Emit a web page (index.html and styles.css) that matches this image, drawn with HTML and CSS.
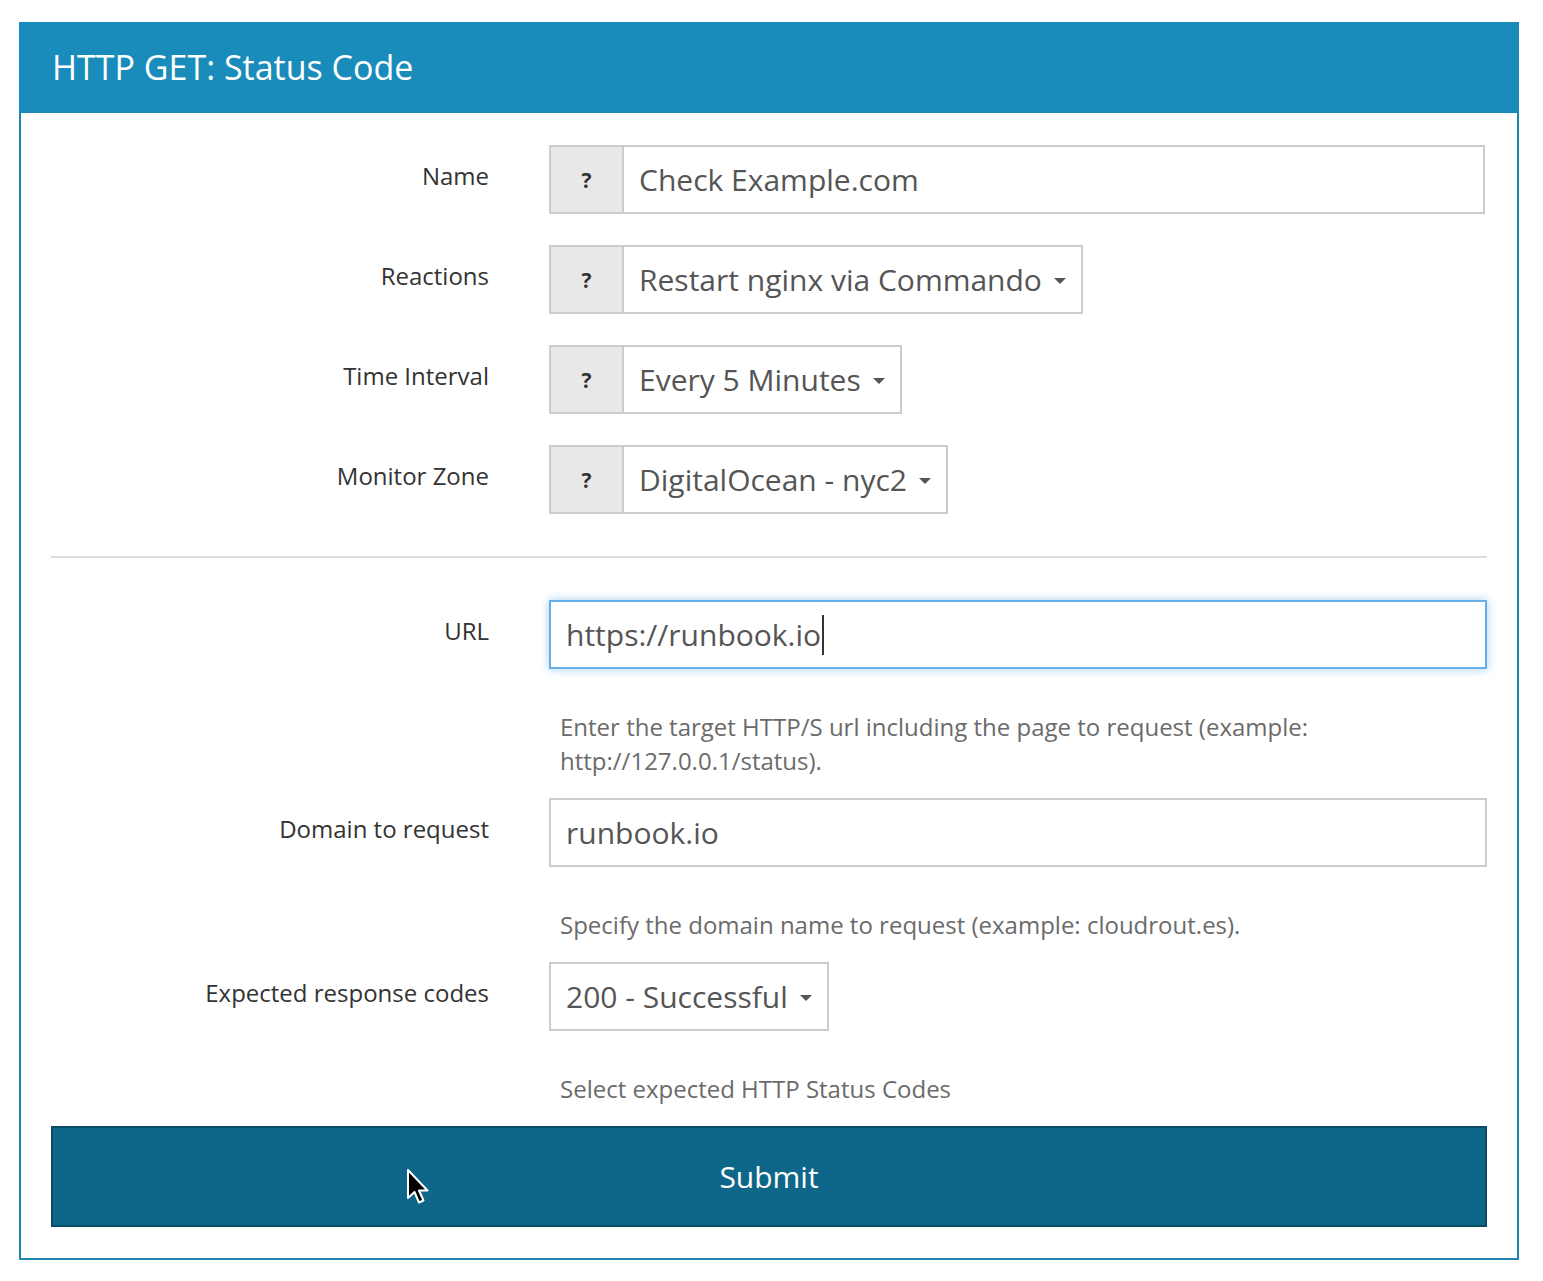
FILE: index.html
```html
<!DOCTYPE html>
<html lang="en">
<head>
<meta charset="utf-8">
<title>HTTP GET: Status Code</title>
<link rel="stylesheet" href="styles.css">
</head>
<body>
<div class="panel">
  <div class="panel-heading">HTTP GET: Status Code</div>
  <div class="panel-body">
    <div class="rows">
      <div class="row">
        <div class="label">Name</div>
        <div class="field">
          <div class="group group-wide">
            <span class="addon">?</span>
            <div class="control grow">Check Example.com</div>
          </div>
        </div>
      </div>
      <div class="row">
        <div class="label">Reactions</div>
        <div class="field">
          <div class="group">
            <span class="addon">?</span>
            <div class="control select">Restart nginx via Commando<span class="caret"></span></div>
          </div>
        </div>
      </div>
      <div class="row">
        <div class="label">Time Interval</div>
        <div class="field">
          <div class="group">
            <span class="addon">?</span>
            <div class="control select">Every 5 Minutes<span class="caret"></span></div>
          </div>
        </div>
      </div>
      <div class="row">
        <div class="label">Monitor Zone</div>
        <div class="field">
          <div class="group">
            <span class="addon">?</span>
            <div class="control select">DigitalOcean - nyc2<span class="caret"></span></div>
          </div>
        </div>
      </div>
    </div>

    <hr class="divider">

    <div class="row">
      <div class="label">URL</div>
      <div class="field">
        <div class="control full focus">https://runbook.io<span class="text-caret"></span></div>
        <p class="help">Enter the target HTTP/S url including the page to request (example: http://127.0.0.1/status).</p>
      </div>
    </div>
    <div class="row">
      <div class="label">Domain to request</div>
      <div class="field">
        <div class="control full">runbook.io</div>
        <p class="help">Specify the domain name to request (example: cloudrout.es).</p>
      </div>
    </div>
    <div class="row">
      <div class="label">Expected response codes</div>
      <div class="field">
        <div class="control select standalone">200 - Successful<span class="caret"></span></div>
        <p class="help">Select expected HTTP Status Codes</p>
      </div>
    </div>

    <button class="submit" type="button">Submit
      <svg class="pointer" width="24" height="38" viewBox="0 0 24 38" aria-hidden="true">
        <path d="M2 2 L2 30 L8.5 24 L13 34.5 L17.5 32.5 L13 22.5 L21.5 22.5 Z" fill="#000" stroke="#fff" stroke-width="2" stroke-linejoin="round"/>
      </svg>
    </button>
  </div>
</div>
</body>
</html>
```
FILE: styles.css
```css
* { box-sizing: border-box; }

html, body {
  margin: 0;
  padding: 0;
  background: #ffffff;
}

body {
  font-family: "Open Sans", "Liberation Sans", sans-serif;
  color: #333333;
  padding: 22px 24px 0 19px;
}

.panel {
  width: 1500px;
  border: 2px solid #1f86b2;
  background: #ffffff;
}

.panel-heading {
  margin: -2px -2px 0 -2px;
  padding: 0 33px;
  background: #198cbb;
  color: #ffffff;
  font-size: 34px;
  line-height: 91px;
  height: 91px;
}

.panel-body {
  padding: 32px 30px 31px 30px;
}

.rows {
  display: flex;
  flex-direction: column;
  gap: 31px;
}

.row {
  display: grid;
  grid-template-columns: 438px 1fr;
  column-gap: 60px;
  align-items: start;
}

.label {
  text-align: right;
  font-size: 24px;
  line-height: 34px;
  padding-top: 14px;
  color: #333333;
}

.field {
  display: flex;
  flex-direction: column;
  align-items: flex-start;
}

.group {
  display: flex;
  height: 69px;
}

.group-wide {
  width: 936px;
}

.addon {
  width: 73px;
  flex: none;
  display: flex;
  align-items: center;
  justify-content: center;
  background: #e8e8e8;
  border: 2px solid #cccccc;
  border-right: 0;
  font-weight: 700;
  font-size: 21px;
  color: #333333;
}

.control {
  height: 69px;
  border: 2px solid #cccccc;
  background: #ffffff;
  color: #555555;
  font-size: 30px;
  display: flex;
  align-items: center;
  padding: 0 15px;
  white-space: nowrap;
}

.grow { flex: 1; }

.select .caret {
  display: inline-block;
  width: 0;
  height: 0;
  margin-left: 12px;
  margin-top: 3px;
  border-left: 6px solid transparent;
  border-right: 6px solid transparent;
  border-top: 6px solid #555555;
}

.full {
  width: 100%;
}

.focus {
  border-color: #66afe9;
  box-shadow: 0 0 9px rgba(102, 175, 233, 0.6);
}

.text-caret {
  display: inline-block;
  width: 2px;
  height: 40px;
  background: #333333;
  margin-left: 1px;
}

.help {
  margin: 41px 0 20px 0;
  padding-left: 11px;
  font-size: 24px;
  line-height: 34px;
  color: #6b6b6b;
  max-width: 800px;
}

.divider {
  margin: 42px 0 42px 0;
  border: 0;
  border-top: 2px solid #dddddd;
  height: 0;
}

.submit {
  position: relative;
  display: block;
  width: 100%;
  height: 101px;
  margin: 0;
  background: #0e6688;
  border: 2px solid #0a4c66;
  color: #ffffff;
  font-family: "Open Sans", "Liberation Sans", sans-serif;
  font-size: 30px;
  text-align: center;
  padding: 0;
}

.pointer {
  position: absolute;
  left: 353px;
  top: 40px;
}
```
